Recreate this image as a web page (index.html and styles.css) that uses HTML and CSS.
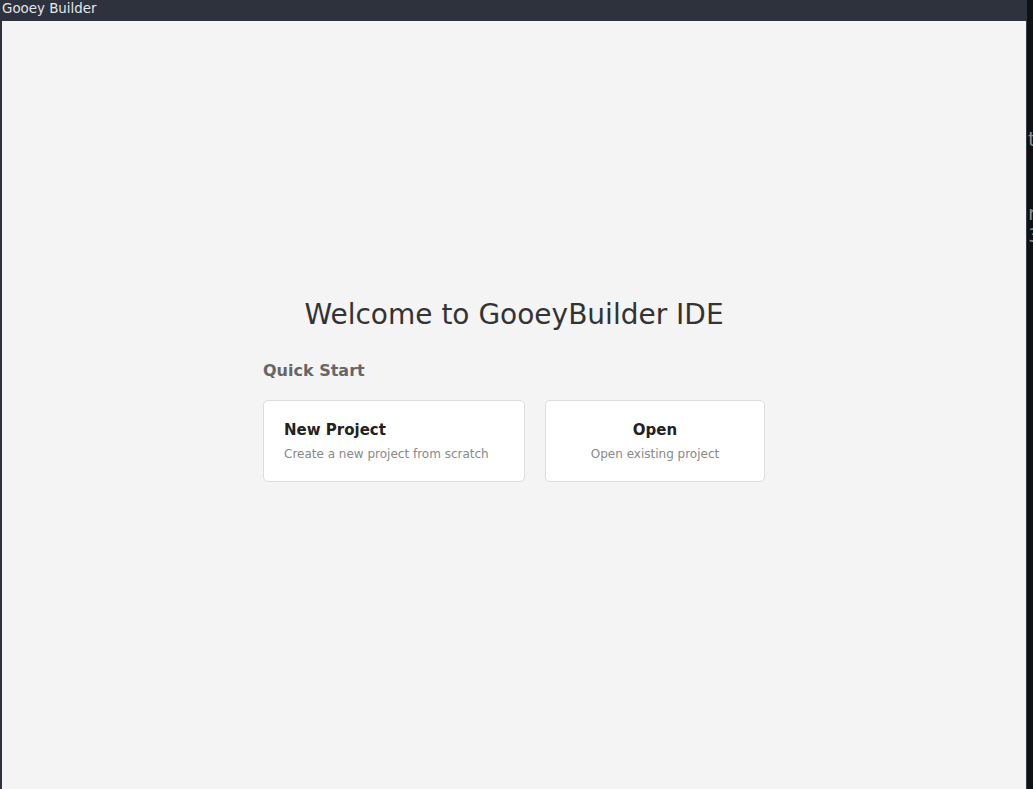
FILE: index.html
```html
<!DOCTYPE html>
<html lang="en">
<head>
<meta charset="utf-8">
<title>Gooey Builder</title>
<link rel="stylesheet" href="styles.css">
</head>
<body>
<div class="window">
  <div class="titlebar">Gooey Builder</div>
  <main class="content">
    <h1 class="welcome">Welcome to GooeyBuilder IDE</h1>
    <section class="quick">
      <h2 class="quick-title">Quick Start</h2>
      <div class="cards">
        <div class="card card-new">
          <div class="card-title">New Project</div>
          <div class="card-sub">Create a new project from scratch</div>
        </div>
        <div class="card card-open">
          <div class="card-title">Open</div>
          <div class="card-sub">Open existing project</div>
        </div>
      </div>
    </section>
  </main>
</div>
<div class="backdrop">
  <div class="bd-line bd-first">t</div>
  <div class="bd-line bd-second">r</div>
  <div class="bd-line">3</div>
</div>
</body>
</html>
```
FILE: styles.css
```css
html, body {
  margin: 0;
  padding: 0;
}
body {
  width: 1033px;
  height: 789px;
  overflow: hidden;
  display: flex;
  background: #0e1116;
  font-family: "DejaVu Sans", sans-serif;
}
.window {
  width: 1027px;
  height: 789px;
  display: flex;
  flex-direction: column;
  flex: none;
}
.titlebar {
  height: 21px;
  background: #2e323c;
  color: #e4e6ea;
  font-size: 13.4px;
  line-height: 18px;
  padding-left: 2px;
  box-sizing: border-box;
  white-space: nowrap;
}
.content {
  flex: 1;
  background: #f4f4f4;
  border-left: 2px solid #2e323c;
  border-right: 1px solid #3a3e48;
  box-sizing: border-box;
  padding-top: 277px;
  display: flex;
  flex-direction: column;
  align-items: center;
}
.welcome {
  margin: 0;
  font-size: 28px;
  font-weight: normal;
  color: #333333;
  line-height: 33px;
}
.quick {
  width: 502px;
  margin-top: 30px;
}
.quick-title {
  margin: 0;
  font-size: 16px;
  font-weight: bold;
  color: #666666;
  line-height: 19px;
}
.cards {
  display: flex;
  gap: 20px;
  margin-top: 20px;
}
.card {
  background: #ffffff;
  border: 1px solid #dddddd;
  border-radius: 5px;
  height: 82px;
  box-sizing: border-box;
  padding: 20px 20px 0;
  display: flex;
  flex-direction: column;
  gap: 8px;
}
.card-new {
  width: 262px;
}
.card-open {
  width: 220px;
  align-items: center;
}
.card-title {
  font-size: 15px;
  font-weight: bold;
  color: #222222;
  line-height: 18px;
}
.card-sub {
  font-size: 12px;
  color: #888888;
  line-height: 15px;
}
.backdrop {
  flex: 1;
  overflow: hidden;
  color: #8a8d92;
  font-size: 20px;
  line-height: 22px;
  padding-top: 128px;
  white-space: nowrap;
}
.bd-line {
  margin-left: 1px;
}
.bd-second {
  margin-top: 52px;
}
```
